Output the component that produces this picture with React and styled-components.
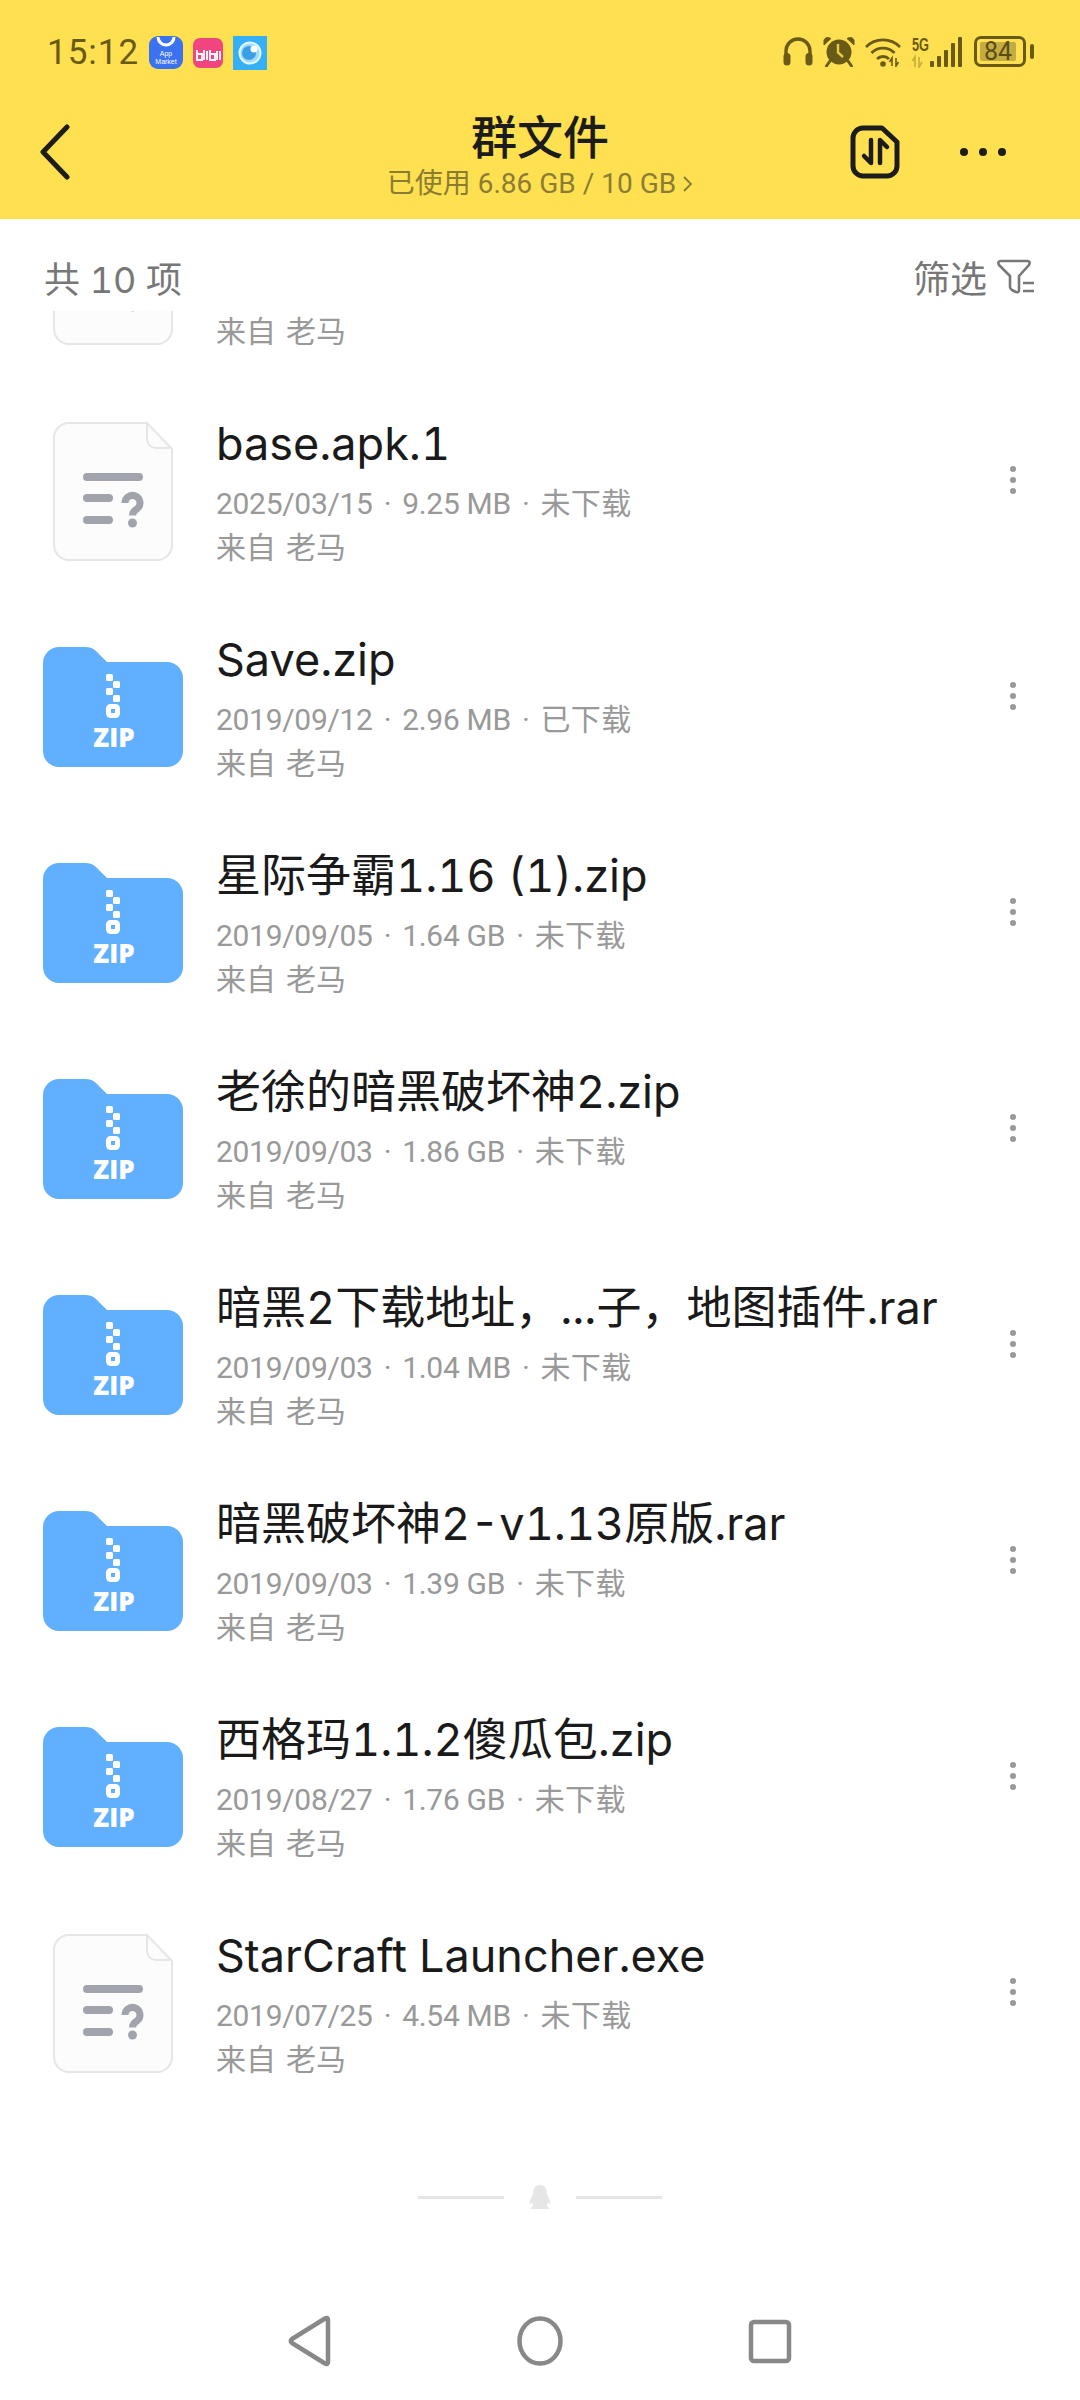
import React from "react";
import styled, { createGlobalStyle } from "styled-components";

// first row is scrolled mostly under the filter bar, only its sender line shows
const files = [
	{ name: "", meta: null, type: "file" },
	{ name: "base.apk.1", meta: ["2025/03/15", "9.25 MB", "未下载"], type: "file" },
	{ name: "Save.zip", meta: ["2019/09/12", "2.96 MB", "已下载"], type: "zip" },
	{ name: "星际争霸1.16 (1).zip", meta: ["2019/09/05", "1.64 GB", "未下载"], type: "zip" },
	{ name: "老徐的暗黑破坏神2.zip", meta: ["2019/09/03", "1.86 GB", "未下载"], type: "zip" },
	{ name: "暗黑2下载地址，...子，地图插件.rar", meta: ["2019/09/03", "1.04 MB", "未下载"], type: "zip" },
	{ name: "暗黑破坏神2-v1.13原版.rar", meta: ["2019/09/03", "1.39 GB", "未下载"], type: "zip" },
	{ name: "西格玛1.1.2傻瓜包.zip", meta: ["2019/08/27", "1.76 GB", "未下载"], type: "zip" },
	{ name: "StarCraft Launcher.exe", meta: ["2019/07/25", "4.54 MB", "未下载"], type: "file" },
];

function FileIcon() {
	return (
		<svg width="140" height="160" viewBox="0 0 140 160">
			<path d="M26 12 H104 L129 38 V134 a15 15 0 0 1 -15 15 H26 a15 15 0 0 1 -15 -15 V27 a15 15 0 0 1 15 -15 z" fill="#fcfcfc" stroke="#e6e6e6" strokeWidth="2" />
			<path d="M104 12 V28 a9 9 0 0 0 9 9 H129" fill="none" stroke="#e6e6e6" strokeWidth="2" />
			<g fill="none" stroke="#a1a4ac" strokeWidth="8" strokeLinecap="round">
				<path d="M44 66 H96" />
				<path d="M44 87 H66" />
				<path d="M44 109 H66" />
				<path d="M82 92 a7.5 7.5 0 1 1 12.5 5.5 q-5 3 -5 7" strokeWidth="7" strokeLinecap="butt" />
			</g>
			<circle cx="89.5" cy="112" r="4.5" fill="#a1a4ac" />
		</svg>
	);
}

function ZipIcon() {
	return (
		<svg width="140" height="160" viewBox="0 0 140 160">
			<path d="M16 20 H42 q7 0 11 4 l11 11 H124 a16 16 0 0 1 16 16 V124 a16 16 0 0 1 -16 16 H16 a16 16 0 0 1 -16 -16 V36 a16 16 0 0 1 16 -16 z" fill="#60b0ff" />
			<g fill="#fff">
				<rect x="63" y="47" width="7" height="7" rx="1.5" />
				<rect x="70" y="54" width="7" height="7" rx="1.5" />
				<rect x="63" y="61" width="7" height="7" rx="1.5" />
				<rect x="70" y="68" width="7" height="7" rx="1.5" />
			</g>
			<rect x="65.5" y="79.5" width="9" height="9" rx="2" fill="none" stroke="#fff" strokeWidth="5" />
			<text x="71" y="120" textAnchor="middle" fill="#fff" fontFamily="'Open Sans', sans-serif" fontWeight="800" fontSize="26">ZIP</text>
		</svg>
	);
}

function FileRow({ file }) {
	return (
		<Row>
			<IconBox>{file.type === "zip" ? <ZipIcon /> : <FileIcon />}</IconBox>
			<RowText>
				<FileName>{file.name}</FileName>
				<Meta>
					{file.meta && (
						<>
							{file.meta[0]}
							<Separator>·</Separator>
							{file.meta[1]}
							<Separator>·</Separator>
							<MetaStatus>{file.meta[2]}</MetaStatus>
						</>
					)}
				</Meta>
				<Sender>来自 老马</Sender>
			</RowText>
			{file.meta && (
				<RowMore>
					<svg width="12" height="34" viewBox="0 0 12 34">
						<circle cx="6" cy="6" r="3" fill="#999" />
						<circle cx="6" cy="17" r="3" fill="#999" />
						<circle cx="6" cy="28" r="3" fill="#999" />
					</svg>
				</RowMore>
			)}
		</Row>
	);
}

export default function App() {
	return (
		<Page>
			<GlobalStyle />
			<Header>
				<StatusBar>
					<StatusLeft>
						<Time>15:12</Time>
						<svg width="34" height="33" viewBox="0 0 34 33">
							<rect width="34" height="33" rx="9" fill="#3b72f0" />
							<path d="M9 1 a8 8 0 0 0 16 0" fill="none" stroke="#fff" strokeWidth="3" />
							<text x="17" y="20" textAnchor="middle" fill="#fff" fontFamily="'Liberation Sans', sans-serif" fontSize="7">App</text>
							<text x="17" y="28" textAnchor="middle" fill="#fff" fontFamily="'Liberation Sans', sans-serif" fontSize="7">Market</text>
						</svg>
						<BiliIcon>
							<svg width="30" height="30" viewBox="0 0 30 30">
								<rect width="30" height="30" rx="7" fill="#f0457f" />
								<path d="M4 12 V22 H9 V16 H5 M11 12 V22 M14 13 V22 M17 12 V22 H22 V16 H18 M24 13 V22 M27 13 V22" fill="none" stroke="#fff" strokeWidth="1.8" />
							</svg>
						</BiliIcon>
						<svg width="34" height="34" viewBox="0 0 34 34">
							<rect width="34" height="34" fill="#35b0f6" />
							<circle cx="17" cy="17" r="10.5" fill="#9fdcfb" stroke="#e4f6ff" strokeWidth="2" />
							<circle cx="16" cy="17" r="7" fill="#3a9fe6" />
							<circle cx="21" cy="13" r="3.5" fill="#fff" />
						</svg>
					</StatusLeft>
					<StatusRight>
						<svg width="30" height="30" viewBox="0 0 30 30">
							<path d="M3 19 V15 a12 12 0 0 1 24 0 V19" fill="none" stroke="#6a5a17" strokeWidth="3.4" />
							<rect x="0.5" y="17" width="7" height="12.5" rx="3.5" fill="#6a5a17" />
							<rect x="22.5" y="17" width="7" height="12.5" rx="3.5" fill="#6a5a17" />
						</svg>
						<svg width="32" height="31" viewBox="0 0 32 31">
							<circle cx="16" cy="16" r="12.5" fill="#6a5a17" />
							<path d="M1 9 L8 2.5 Q3 0 1 4 z M31 9 L24 2.5 Q29 0 31 4 z" fill="#6a5a17" stroke="#6a5a17" strokeWidth="1" />
							<path d="M7 25 L3.5 30 M25 25 L28.5 30" fill="none" stroke="#6a5a17" strokeWidth="3" strokeLinecap="round" />
							<path d="M15 8 V16.5 L20 21" fill="none" stroke="#e8cc4c" strokeWidth="2.4" />
						</svg>
						<svg width="37" height="31" viewBox="0 0 37 31">
							<g fill="none" stroke="#6a5a17" strokeWidth="2.8">
								<path d="M1 11 a24 24 0 0 1 34 0" />
								<path d="M6.5 17 a16 16 0 0 1 23 0" />
								<path d="M12 23 a8.5 8.5 0 0 1 12 0" />
							</g>
							<circle cx="18" cy="28" r="2.8" fill="#6a5a17" />
							<path d="M27 30 V22 L24.5 26 M31 22 V30 L33.5 26" fill="none" stroke="#6a5a17" strokeWidth="1.6" />
						</svg>
						<svg width="51" height="32" viewBox="0 0 51 32">
							<text x="0" y="15" fill="#6a5a17" fontFamily="'Liberation Sans', sans-serif" fontWeight="700" fontSize="18" textLength="17" lengthAdjust="spacingAndGlyphs">5G</text>
							<path d="M3 31 V21 L0.5 25 M7 21 V31 L10 26" fill="none" stroke="#6a5a17" strokeOpacity="0.35" strokeWidth="1.8" />
							<rect x="18" y="25" width="4" height="6" rx="1" fill="#6a5a17" />
							<rect x="25" y="20" width="4" height="11" rx="1" fill="#6a5a17" />
							<rect x="32" y="14" width="4" height="17" rx="1" fill="#6a5a17" />
							<rect x="39" y="7" width="4" height="24" rx="1" fill="#6a5a17" />
							<rect x="46" y="1" width="4" height="30" rx="1" fill="#6a5a17" />
						</svg>
						<Battery>
							<BatteryBody>
								<BatteryFill>84</BatteryFill>
							</BatteryBody>
							<BatteryNub />
						</Battery>
					</StatusRight>
				</StatusBar>
				<TitleBar>
					<BackSlot>
						<svg width="32" height="56" viewBox="0 0 32 56">
							<path d="M28 3 L4 28 L28 53" fill="none" stroke="#1c1c1c" strokeWidth="5" strokeLinecap="round" strokeLinejoin="round" />
						</svg>
					</BackSlot>
					<TitleBlock>
						<Title>群文件</Title>
						<Usage>
							已使用 6.86 GB / 10 GB
							<svg width="12" height="20" viewBox="0 0 12 20">
								<path d="M3 3 L10 10 L3 17" fill="none" stroke="#8b7c34" strokeWidth="1.8" />
							</svg>
						</Usage>
					</TitleBlock>
					<Actions>
						<svg width="50" height="54" viewBox="0 0 50 54">
							<path d="M13 3 H32 L47 17 V41 a10 10 0 0 1 -10 10 H13 a10 10 0 0 1 -10 -10 V13 a10 10 0 0 1 10 -10 z" fill="none" stroke="#1c1c1c" strokeWidth="5" strokeLinejoin="round" />
							<path d="M21 15 V38 L14 31" fill="none" stroke="#1c1c1c" strokeWidth="4.5" strokeLinecap="round" strokeLinejoin="round" />
							<path d="M30 38 V15 L37 22" fill="none" stroke="#1c1c1c" strokeWidth="4.5" strokeLinecap="round" strokeLinejoin="round" />
						</svg>
						<svg width="46" height="10" viewBox="0 0 46 10">
							<circle cx="4" cy="5" r="4" fill="#1c1c1c" />
							<circle cx="23" cy="5" r="4" fill="#1c1c1c" />
							<circle cx="42" cy="5" r="4" fill="#1c1c1c" />
						</svg>
					</Actions>
				</TitleBar>
			</Header>
			<FilterBar>
				<Count>共 10 项</Count>
				<FilterButton>
					筛选
					<svg width="38" height="36" viewBox="0 0 38 36">
						<path d="M4 2 H30 Q34 2 32 6 L22 17 V31 Q22 34 19 33 L15 31 Q13 30 13 28 V17 L2 6 Q0 2 4 2 z" fill="none" stroke="#777" strokeWidth="2.6" strokeLinejoin="round" />
						<path d="M26 24 H37 M26 32 H37" fill="none" stroke="#777" strokeWidth="2.6" />
					</svg>
				</FilterButton>
			</FilterBar>
			<ListViewport>
				<List>
					{files.map((file, i) => (
						<FileRow key={i} file={file} />
					))}
				</List>
			</ListViewport>
			<EndMark>
				<EndLine />
				<svg width="24" height="24" viewBox="0 0 24 24">
					<path d="M12 0 C17 0 19 4 19 9 C20 12 23 16 22 19 L19.5 17.5 L19 22 H21 V24 H3 V22 H5 L4.5 17.5 L2 19 C1 16 4 12 5 9 C5 4 7 0 12 0 z" fill="#e6e6e6" />
				</svg>
				<EndLine />
			</EndMark>
			<NavBar>
				<NavSlot>
					<svg width="46" height="52" viewBox="0 0 46 52">
						<path d="M41 5 V47 Q41 50 38 48.5 L5 28 Q2.5 26 5 24 L38 3.5 Q41 2 41 5 z" fill="none" stroke="#888" strokeWidth="4.5" strokeLinejoin="round" />
					</svg>
				</NavSlot>
				<NavSlot>
					<svg width="46" height="52" viewBox="0 0 46 52">
						<ellipse cx="23" cy="26" rx="20.5" ry="22.5" fill="none" stroke="#888" strokeWidth="4.5" />
					</svg>
				</NavSlot>
				<NavSlot>
					<svg width="46" height="52" viewBox="0 0 46 52">
						<rect x="4" y="7" width="38" height="39" rx="3" fill="none" stroke="#888" strokeWidth="4.5" />
					</svg>
				</NavSlot>
			</NavBar>
		</Page>
	);
}

const GlobalStyle = createGlobalStyle`
	html, body {
		margin: 0;
		padding: 0;
		background: #fff;
	}
`;

const Page = styled.div`
	width: 1080px;
	height: 2400px;
	overflow: hidden;
	background: #fff;
	font-family: Inter, Roboto, "Noto Sans CJK SC", sans-serif;
	font-variant-numeric: tabular-nums;
`;

const Header = styled.header`
	height: 219px;
	background: #ffe050;
`;

const StatusBar = styled.div`
	height: 106px;
	padding: 36px 46px 0 47px;
	box-sizing: border-box;
	display: flex;
	justify-content: space-between;
	align-items: flex-start;
`;

const StatusLeft = styled.div`
	display: flex;
	align-items: flex-start;
	gap: 8px;
`;

const Time = styled.span`
	font-family: Roboto, sans-serif;
	font-size: 35px;
	line-height: 34px;
	letter-spacing: 1px;
	color: #6a5a17;
	margin-right: 2px;
`;

const BiliIcon = styled.span`
	display: flex;
	padding-top: 2px;
	margin: 0 2px;
`;

const StatusRight = styled.div`
	display: flex;
	align-items: flex-start;
	gap: 10px;
`;

const Battery = styled.div`
	display: flex;
	align-items: center;
	gap: 4px;
	margin-left: 1px;
`;

const BatteryBody = styled.div`
	width: 52px;
	height: 31px;
	box-sizing: border-box;
	border: 3px solid #6a5a17;
	border-radius: 7px;
	padding: 3px;
`;

const BatteryFill = styled.div`
	width: 36px;
	height: 100%;
	background: #c4ab42;
	border-radius: 2px;
	color: #5a4d14;
	font-family: Roboto, sans-serif;
	font-size: 25px;
	line-height: 19px;
	text-align: center;
`;

const BatteryNub = styled.div`
	width: 4px;
	height: 15px;
	border-radius: 2px;
	background: #6a5a17;
`;

const TitleBar = styled.div`
	height: 92px;
	display: grid;
	grid-template-columns: 1fr auto 1fr;
	align-items: center;
`;

const BackSlot = styled.div`
	padding-left: 39px;
	display: flex;
`;

const TitleBlock = styled.div`
	text-align: center;
`;

const Title = styled.div`
	font-size: 46px;
	line-height: 62px;
	font-weight: 500;
	color: #1c1c1c;
`;

const Usage = styled.div`
	display: flex;
	align-items: center;
	justify-content: center;
	gap: 5px;
	font-family: Roboto, "Noto Sans CJK SC", sans-serif;
	font-size: 28px;
	line-height: 32px;
	margin-bottom: -2px;
	color: #8b7c34;
`;

const Actions = styled.div`
	display: flex;
	align-items: center;
	justify-content: flex-end;
	gap: 60px;
	padding-right: 74px;
`;

const FilterBar = styled.div`
	height: 92px;
	box-sizing: border-box;
	padding: 24px 45px 0 44px;
	display: flex;
	align-items: center;
	justify-content: space-between;
	color: #777;
`;

const Count = styled.div`
	font-size: 36px;
`;

const FilterButton = styled.div`
	display: flex;
	align-items: center;
	gap: 10px;
	font-size: 37px;
`;

const ListViewport = styled.div`
	overflow: hidden;
`;

const List = styled.div`
	margin-top: -143.8px;
`;

const Row = styled.div`
	height: 216px;
	padding: 0 61px 0 43px;
	box-sizing: border-box;
	display: flex;
	align-items: center;
	gap: 33px;
`;

const IconBox = styled.div`
	flex: none;
	display: flex;
`;

const RowText = styled.div`
	flex: 1;
	min-width: 0;
	padding-top: 1.5px;
`;

const RowMore = styled.div`
	flex: none;
	display: flex;
	margin-bottom: 22px;
`;

const FileName = styled.div`
	font-size: 45px;
	line-height: 60px;
	min-height: 60px;
	margin-bottom: 7px;
	color: #1a1a1a;
	white-space: nowrap;
`;

const Meta = styled.div`
	font-family: Roboto, "Noto Sans CJK SC", sans-serif;
	font-size: 30px;
	letter-spacing: -0.3px;
	line-height: 45px;
	min-height: 45px;
	color: #999;
	white-space: nowrap;
`;

const Separator = styled.span`
	margin: 0 11px;
`;

const MetaStatus = styled.span`
	letter-spacing: 0.4px;
`;

const Sender = styled.div`
	font-family: Roboto, "Noto Sans CJK SC", sans-serif;
	font-size: 30px;
	word-spacing: 2.5px;
	line-height: 45px;
	margin-top: -1.5px;
	color: #999;
	white-space: nowrap;
`;

const EndMark = styled.div`
	margin-top: 74px;
	display: flex;
	align-items: center;
	justify-content: center;
	gap: 24px;
`;

const EndLine = styled.div`
	width: 86px;
	height: 3px;
	background: #e6e6e6;
`;

const NavBar = styled.div`
	padding-top: 106px;
	display: flex;
	justify-content: center;
	gap: 184px;
`;

const NavSlot = styled.div`
	display: flex;
`;
